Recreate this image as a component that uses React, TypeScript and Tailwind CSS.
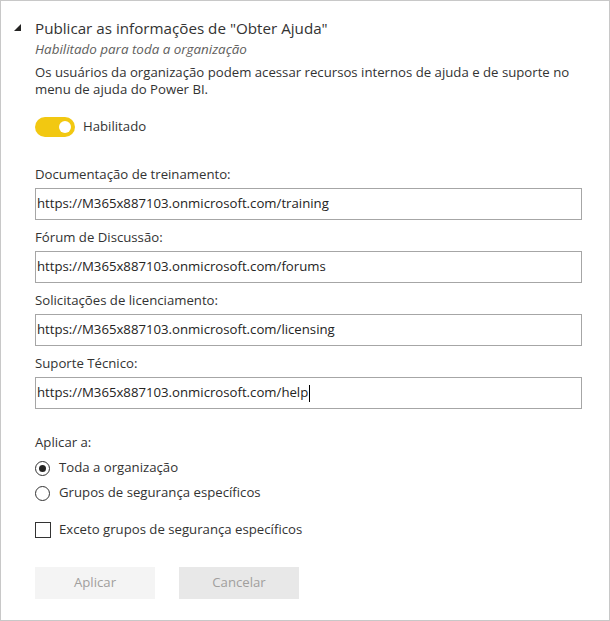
import React from "react";

const font = { fontFamily: '"Open Sans", "Noto Sans", sans-serif' };

function UrlField({ label, value, caret }: { label: string; value: string; caret?: boolean }) {
  return (
    <div className="flex flex-col">
      <div className="h-[20px] leading-[20px] text-[13.2px] text-[#333333] mb-[4px]">{label}</div>
      <div className="h-[32px] w-[547px] border border-[#a6a6a6] bg-white flex items-center pl-[1px] text-[13.2px] text-[#252423] mb-[7px]">
        <span>{value}</span>
        {caret && <span className="inline-block w-[1px] h-[17px] bg-black ml-[1px]" />}
      </div>
    </div>
  );
}

export default function App() {
  return (
    <div className="w-[610px] h-[621px] bg-white border border-[#c8c8c8] relative" style={font}>
      <div className="absolute left-[13px] top-[23px]">
        <svg width="8" height="8" viewBox="0 0 8 8">
          <polygon points="7,0 7,7 0,7" fill="#252423" />
        </svg>
      </div>
      <div className="pl-[34px] pt-[15px]">
        <div className="h-[24px] leading-[24px] text-[15.2px] text-[#333333]">
          Publicar as informações de "Obter Ajuda"
        </div>
        <div className="h-[18px] leading-[18px] text-[13.4px] italic text-[#605e5c]">
          Habilitado para toda a organização
        </div>
        <div className="mt-[6px] text-[13.2px] leading-[17px] text-[#333333] w-[560px]">
          Os usuários da organização podem acessar recursos internos de ajuda e de suporte no menu de ajuda do Power BI.
        </div>
        <div className="mt-[19px] flex items-center h-[20px]">
          <div className="w-[40px] h-[20px] rounded-full bg-[#f2c811] flex items-center justify-end pr-[4px]">
            <div className="w-[12px] h-[12px] rounded-full bg-white" />
          </div>
          <span className="ml-[8px] text-[13.2px] text-[#333333]">Habilitado</span>
        </div>
        <div className="mt-[27px]">
          <UrlField label="Documentação de treinamento:" value="https://M365x887103.onmicrosoft.com/training" />
          <UrlField label="Fórum de Discussão:" value="https://M365x887103.onmicrosoft.com/forums" />
          <UrlField label="Solicitações de licenciamento:" value="https://M365x887103.onmicrosoft.com/licensing" />
          <UrlField label="Suporte Técnico:" value="https://M365x887103.onmicrosoft.com/help" caret />
        </div>
        <div className="mt-[16px] h-[20px] leading-[20px] text-[13.2px] text-[#333333]">Aplicar a:</div>
        <div className="mt-[6px] flex items-center h-[20px]">
          <div className="w-[15px] h-[15px] rounded-full border border-[#333333] flex items-center justify-center">
            <div className="w-[7px] h-[7px] rounded-full bg-[#252423]" />
          </div>
          <span className="ml-[9px] text-[13.2px] text-[#333333]">Toda a organização</span>
        </div>
        <div className="mt-[5px] flex items-center h-[20px]">
          <div className="w-[15px] h-[15px] rounded-full border border-[#333333]" />
          <span className="ml-[9px] text-[13.2px] text-[#333333]">Grupos de segurança específicos</span>
        </div>
        <div className="mt-[17px] flex items-center h-[20px]">
          <div className="w-[16px] h-[16px] border border-[#333333] bg-white" />
          <span className="ml-[8px] text-[13.2px] text-[#333333]">Exceto grupos de segurança específicos</span>
        </div>
        <div className="mt-[27px] flex gap-[24px]">
          <div className="w-[120px] h-[32px] bg-[#f4f4f4] flex items-center justify-center text-[13.2px] text-[#a19f9d]">
            Aplicar
          </div>
          <div className="w-[120px] h-[32px] bg-[#e8e8e8] flex items-center justify-center text-[13.2px] text-[#a19f9d]">
            Cancelar
          </div>
        </div>
      </div>
    </div>
  );
}
